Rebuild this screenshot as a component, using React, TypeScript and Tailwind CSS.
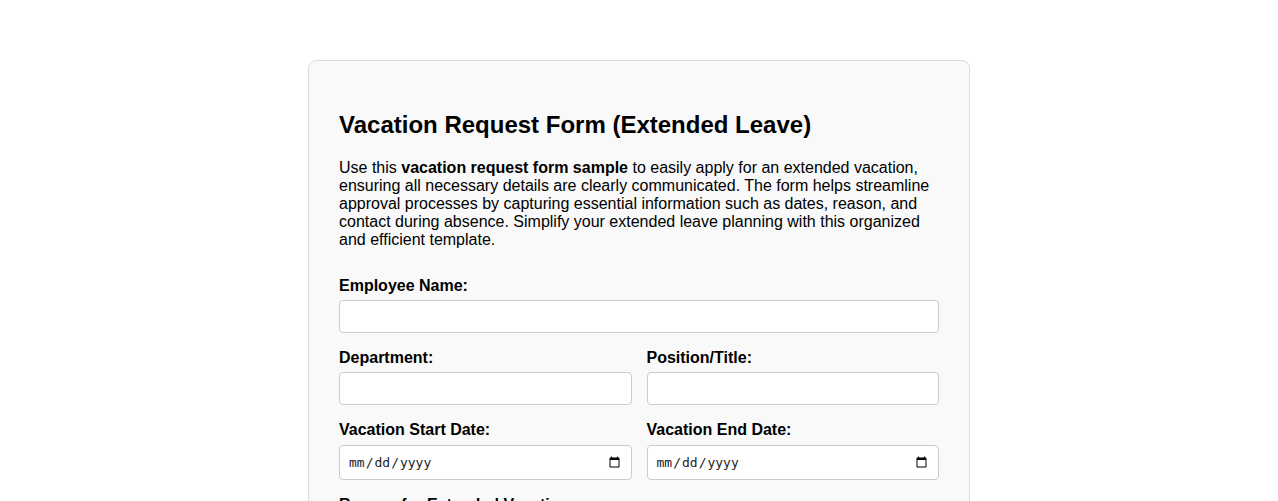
import React from 'react';

const Field: React.FC<{ label: string; type?: string; className?: string }> = ({ label, type = 'text', className = '' }) => (
    <div className={`mb-[16px] ${className}`}>
        <label className="block font-bold text-[16px] leading-[18.4px] mb-[5px]">{label}</label>
        {type === 'date' ? (
            <input
                type="date"
                className="block w-full h-[35px] px-[8px] bg-white border border-[#ccc] rounded-[4px] text-[13px] text-[#222] font-['DejaVu_Sans_Mono',monospace]"
            />
        ) : (
            <input
                type={type}
                className="block w-full h-[33px] px-[8px] bg-white border border-[#ccc] rounded-[4px] text-[16px]"
            />
        )}
    </div>
);

export default function App() {
    return (
        <div className="min-h-screen bg-white font-['Liberation_Sans',Arial,sans-serif] text-black pt-[60px] pb-10">
            <div className="w-[662px] mx-auto bg-[#f9f9f9] border border-[#ddd] rounded-[8px] p-[30px]">
                <h2 className="mt-[20px] mb-[20px] text-[24px] leading-[27.6px] font-bold">Vacation Request Form (Extended Leave)</h2>
                <p className="text-[16px] leading-[18px] mb-[28px]">
                    Use this <strong>vacation request form sample</strong> to easily apply for an extended vacation, ensuring all necessary details are clearly communicated. The form helps streamline approval processes by capturing essential information such as dates, reason, and contact during absence. Simplify your extended leave planning with this organized and efficient template.
                </p>
                <form>
                    <Field label="Employee Name:" />
                    <div className="grid grid-cols-2 gap-x-[15px]">
                        <Field label="Department:" />
                        <Field label="Position/Title:" />
                        <Field label="Vacation Start Date:" type="date" />
                        <Field label="Vacation End Date:" type="date" />
                    </div>
                    <div className="mb-[16px]">
                        <label className="block font-bold text-[16px] leading-[18.4px] mb-[5px]">Reason for Extended Vacation:</label>
                        <textarea className="block w-full h-[100px] p-[8px] bg-white border border-[#ccc] rounded-[4px]" />
                    </div>
                </form>
            </div>
        </div>
    );
}
